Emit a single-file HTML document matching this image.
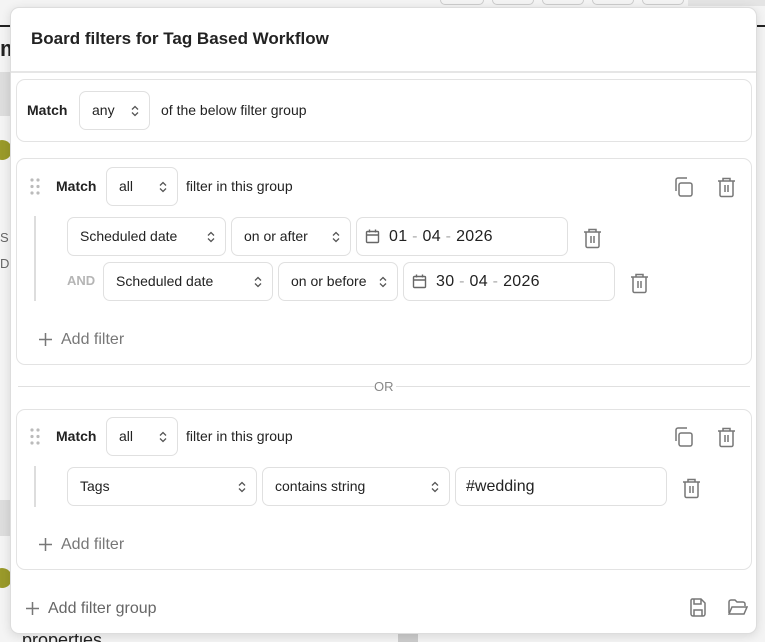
<!DOCTYPE html>
<html style="width:765px;height:642px;overflow:hidden"><head><meta charset="utf-8">
<style>
*{box-sizing:border-box;margin:0;padding:0}
html,body{width:765px;height:642px;overflow:hidden}
body{background:#f4f4f4;font-family:"Liberation Sans",sans-serif;position:relative;color:#222}
.a{position:absolute}
.modal{left:10px;top:7px;width:747px;height:627px;background:#fff;border:1px solid #ddd;border-radius:9px;box-shadow:0 2px 10px rgba(0,0,0,.12)}
.box{position:absolute;border:1px solid #e3e3e3;border-radius:9px;background:#fff}
.sel{position:absolute;border:1px solid #e0e0e0;border-radius:7px;height:39px;font-size:14px;line-height:37px;padding-left:12px;color:#222;background:#fff}
.sel svg{position:absolute;right:10px;top:13px}
.t{position:absolute;font-size:14px;line-height:16px}
.b{font-weight:bold}
.date{font-size:16px;letter-spacing:.3px}
.dash{color:#aaa}
</style></head><body>
<div class="a" style="left:0;top:25px;width:10px;height:2px;background:#222"></div>
<div class="a" style="left:757px;top:25px;width:8px;height:2px;background:#222"></div>
<div class="a" style="left:0;top:36px;font-size:22px;font-weight:bold">m</div>
<div class="a" style="left:0;top:72px;width:10px;height:44px;background:#ddd"></div>
<div class="a" style="left:-8px;top:140px;width:20px;height:20px;border-radius:50%;background:#9a9a2a"></div>
<div class="a" style="left:0;top:230px;font-size:13px;color:#666">S</div>
<div class="a" style="left:0;top:256px;font-size:13px;color:#666">D</div>
<div class="a" style="left:0;top:500px;width:10px;height:36px;background:#ddd"></div>
<div class="a" style="left:-8px;top:568px;width:20px;height:20px;border-radius:50%;background:#9a9a2a"></div>
<div class="a" style="left:22px;top:630px;font-size:18px;line-height:20px;color:#222">properties</div>
<div class="a" style="left:398px;top:634px;width:20px;height:8px;background:#ccc"></div>
<div class="a" style="left:440px;top:0;width:44px;height:5px;border:1px solid #ccc;border-top:none;border-radius:0 0 5px 5px"></div>
<div class="a" style="left:492px;top:0;width:42px;height:5px;border:1px solid #ccc;border-top:none;border-radius:0 0 5px 5px"></div>
<div class="a" style="left:542px;top:0;width:42px;height:5px;border:1px solid #ccc;border-top:none;border-radius:0 0 5px 5px"></div>
<div class="a" style="left:592px;top:0;width:42px;height:5px;border:1px solid #ccc;border-top:none;border-radius:0 0 5px 5px"></div>
<div class="a" style="left:642px;top:0;width:42px;height:5px;border:1px solid #ccc;border-top:none;border-radius:0 0 5px 5px"></div>
<div class="a" style="left:688px;top:0;width:77px;height:6px;background:#e4e4e4"></div>

<div class="a modal"></div>
<div class="a b" style="left:31px;top:29px;font-size:17px">Board filters for Tag Based Workflow</div>
<div class="a" style="left:11px;top:71px;width:745px;height:2px;background:#e6e6e6"></div>

<div class="box" style="left:16px;top:79px;width:736px;height:63px"></div>
<div class="t b" style="left:27px;top:102px">Match</div>
<div class="sel" style="left:79px;top:91px;width:71px">any<svg width="8" height="12" viewBox="0 0 8 12"><path d="M1 4.5L4 1.5 7 4.5M1 7.5L4 10.5 7 7.5" fill="none" stroke="#555" stroke-width="1.3"/></svg></div>
<div class="t" style="left:161px;top:102px">of the below filter group</div>

<div class="box" style="left:16px;top:158px;width:736px;height:207px"></div>
<svg class="a" style="left:30px;top:178px" width="10" height="17"><g fill="#bbb"><circle cx="2" cy="2" r="1.6"/><circle cx="8" cy="2" r="1.6"/><circle cx="2" cy="8.5" r="1.6"/><circle cx="8" cy="8.5" r="1.6"/><circle cx="2" cy="15" r="1.6"/><circle cx="8" cy="15" r="1.6"/></g></svg>
<div class="t b" style="left:56px;top:178px">Match</div>
<div class="sel" style="left:106px;top:167px;width:72px">all<svg width="8" height="12" viewBox="0 0 8 12"><path d="M1 4.5L4 1.5 7 4.5M1 7.5L4 10.5 7 7.5" fill="none" stroke="#555" stroke-width="1.3"/></svg></div>
<div class="t" style="left:186px;top:178px">filter in this group</div>
<svg class="a" style="left:672px;top:176px" width="22" height="22" viewBox="0 0 22 22" fill="none" stroke="#777" stroke-width="1.5"><rect x="7" y="7" width="13" height="13" rx="2"/><path d="M4 15V4a2 2 0 0 1 2-2h9"/></svg>
<svg class="a" style="left:716px;top:176px" width="21" height="22" viewBox="0 0 21 22" fill="none" stroke="#777" stroke-width="1.5"><path d="M2 5h17M7 5V2.5h7V5M4 5v14a1.5 1.5 0 0 0 1.5 1.5h10A1.5 1.5 0 0 0 17 19V5M9 9v7M12 9v7"/></svg>
<div class="a" style="left:34px;top:216px;width:2px;height:85px;background:#ddd"></div>

<div class="sel" style="left:67px;top:217px;width:159px">Scheduled date<svg width="8" height="12" viewBox="0 0 8 12"><path d="M1 4.5L4 1.5 7 4.5M1 7.5L4 10.5 7 7.5" fill="none" stroke="#555" stroke-width="1.3"/></svg></div>
<div class="sel" style="left:231px;top:217px;width:120px">on or after<svg width="8" height="12" viewBox="0 0 8 12"><path d="M1 4.5L4 1.5 7 4.5M1 7.5L4 10.5 7 7.5" fill="none" stroke="#555" stroke-width="1.3"/></svg></div>
<div class="sel date" style="left:356px;top:217px;width:212px;padding-left:32px">01<span class="dash"> - </span>04<span class="dash"> - </span>2026</div>
<svg class="a" style="left:365px;top:229px" width="15" height="15" viewBox="0 0 15 15" fill="none" stroke="#666" stroke-width="1.4"><rect x="1.5" y="2.5" width="12" height="11" rx="1"/><path d="M1.5 6h12M4.5 0.5v3M10.5 0.5v3"/></svg>
<svg class="a" style="left:582px;top:227px" width="21" height="22" viewBox="0 0 21 22" fill="none" stroke="#777" stroke-width="1.5"><path d="M2 5h17M7 5V2.5h7V5M4 5v14a1.5 1.5 0 0 0 1.5 1.5h10A1.5 1.5 0 0 0 17 19V5M9 9v7M12 9v7"/></svg>

<div class="t b" style="left:67px;top:273px;font-size:13px;color:#b5b5b5">AND</div>
<div class="sel" style="left:103px;top:262px;width:170px">Scheduled date<svg width="8" height="12" viewBox="0 0 8 12"><path d="M1 4.5L4 1.5 7 4.5M1 7.5L4 10.5 7 7.5" fill="none" stroke="#555" stroke-width="1.3"/></svg></div>
<div class="sel" style="left:278px;top:262px;width:120px">on or before<svg width="8" height="12" viewBox="0 0 8 12"><path d="M1 4.5L4 1.5 7 4.5M1 7.5L4 10.5 7 7.5" fill="none" stroke="#555" stroke-width="1.3"/></svg></div>
<div class="sel date" style="left:403px;top:262px;width:212px;padding-left:32px">30<span class="dash"> - </span>04<span class="dash"> - </span>2026</div>
<svg class="a" style="left:412px;top:274px" width="15" height="15" viewBox="0 0 15 15" fill="none" stroke="#666" stroke-width="1.4"><rect x="1.5" y="2.5" width="12" height="11" rx="1"/><path d="M1.5 6h12M4.5 0.5v3M10.5 0.5v3"/></svg>
<svg class="a" style="left:629px;top:272px" width="21" height="22" viewBox="0 0 21 22" fill="none" stroke="#777" stroke-width="1.5"><path d="M2 5h17M7 5V2.5h7V5M4 5v14a1.5 1.5 0 0 0 1.5 1.5h10A1.5 1.5 0 0 0 17 19V5M9 9v7M12 9v7"/></svg>

<svg class="a" style="left:38px;top:332px" width="15" height="15"><path d="M7.5 1v13M1 7.5h13" stroke="#777" stroke-width="1.5"/></svg>
<div class="t" style="left:61px;top:331px;font-size:16px;line-height:17px;color:#777">Add filter</div>

<div class="a" style="left:18px;top:386px;width:356px;height:1px;background:#e0e0e0"></div>
<div class="a" style="left:396px;top:386px;width:354px;height:1px;background:#e0e0e0"></div>
<div class="t" style="left:374px;top:379px;font-size:13px;color:#888">OR</div>

<div class="box" style="left:16px;top:409px;width:736px;height:161px"></div>
<svg class="a" style="left:30px;top:428px" width="10" height="17"><g fill="#bbb"><circle cx="2" cy="2" r="1.6"/><circle cx="8" cy="2" r="1.6"/><circle cx="2" cy="8.5" r="1.6"/><circle cx="8" cy="8.5" r="1.6"/><circle cx="2" cy="15" r="1.6"/><circle cx="8" cy="15" r="1.6"/></g></svg>
<div class="t b" style="left:56px;top:428px">Match</div>
<div class="sel" style="left:106px;top:417px;width:72px">all<svg width="8" height="12" viewBox="0 0 8 12"><path d="M1 4.5L4 1.5 7 4.5M1 7.5L4 10.5 7 7.5" fill="none" stroke="#555" stroke-width="1.3"/></svg></div>
<div class="t" style="left:186px;top:428px">filter in this group</div>
<svg class="a" style="left:672px;top:426px" width="22" height="22" viewBox="0 0 22 22" fill="none" stroke="#777" stroke-width="1.5"><rect x="7" y="7" width="13" height="13" rx="2"/><path d="M4 15V4a2 2 0 0 1 2-2h9"/></svg>
<svg class="a" style="left:716px;top:426px" width="21" height="22" viewBox="0 0 21 22" fill="none" stroke="#777" stroke-width="1.5"><path d="M2 5h17M7 5V2.5h7V5M4 5v14a1.5 1.5 0 0 0 1.5 1.5h10A1.5 1.5 0 0 0 17 19V5M9 9v7M12 9v7"/></svg>
<div class="a" style="left:34px;top:466px;width:2px;height:41px;background:#ddd"></div>
<div class="sel" style="left:67px;top:467px;width:190px">Tags<svg width="8" height="12" viewBox="0 0 8 12"><path d="M1 4.5L4 1.5 7 4.5M1 7.5L4 10.5 7 7.5" fill="none" stroke="#555" stroke-width="1.3"/></svg></div>
<div class="sel" style="left:262px;top:467px;width:188px">contains string<svg width="8" height="12" viewBox="0 0 8 12"><path d="M1 4.5L4 1.5 7 4.5M1 7.5L4 10.5 7 7.5" fill="none" stroke="#555" stroke-width="1.3"/></svg></div>
<div class="sel" style="left:455px;top:467px;width:212px;font-size:16px;padding-left:10px">#wedding</div>
<svg class="a" style="left:681px;top:477px" width="21" height="22" viewBox="0 0 21 22" fill="none" stroke="#777" stroke-width="1.5"><path d="M2 5h17M7 5V2.5h7V5M4 5v14a1.5 1.5 0 0 0 1.5 1.5h10A1.5 1.5 0 0 0 17 19V5M9 9v7M12 9v7"/></svg>
<svg class="a" style="left:38px;top:537px" width="15" height="15"><path d="M7.5 1v13M1 7.5h13" stroke="#777" stroke-width="1.5"/></svg>
<div class="t" style="left:61px;top:536px;font-size:16px;line-height:17px;color:#777">Add filter</div>

<svg class="a" style="left:25px;top:601px" width="15" height="15"><path d="M7.5 1v13M1 7.5h13" stroke="#777" stroke-width="1.5"/></svg>
<div class="t" style="left:48px;top:600px;font-size:16px;line-height:17px;color:#666">Add filter group</div>
<svg class="a" style="left:689px;top:598px" width="18" height="19" viewBox="0 0 18 19" fill="none" stroke="#777" stroke-width="1.5"><path d="M3 1h9l4 4v11a2 2 0 0 1-2 2H4a2 2 0 0 1-2-2V3a2 2 0 0 1 1-2z"/><path d="M5 1v5h7V1M5 18v-6h8v6"/></svg>
<svg class="a" style="left:728px;top:599px" width="20" height="17" viewBox="0 0 20 17" fill="none" stroke="#777" stroke-width="1.5"><path d="M1 14V3a2 2 0 0 1 2-2h4l2 2h6a2 2 0 0 1 2 2v2"/><path d="M1 15l3-7h15l-3 7z"/></svg>
</body></html>
